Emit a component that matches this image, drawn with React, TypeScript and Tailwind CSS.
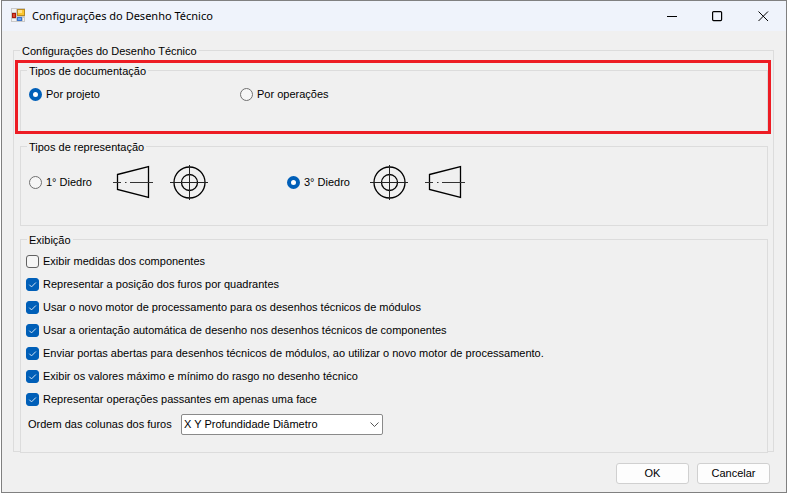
import React, { useState } from "react";

interface GroupBoxProps {
  title: string;
  className?: string;
  children: React.ReactNode;
}

const GroupBox: React.FC<GroupBoxProps> = ({ title, className = "", children }) => {
  return (
    <fieldset className={`min-w-0 border border-[#dcdcdc] bg-[#f0f0f0] ${className}`}>
      <legend className="ml-1.5 px-0.5 pt-px leading-[14px]">{title}</legend>
      {children}
    </fieldset>
  );
};

interface RadioProps {
  name: string;
  label: string;
  checked: boolean;
  onChange: () => void;
}

const Radio: React.FC<RadioProps> = ({ name, label, checked, onChange }) => {
  return (
    <label className="flex items-center gap-1 whitespace-nowrap">
      <input
        type="radio"
        name={name}
        checked={checked}
        onChange={onChange}
        className="size-[13px] shrink-0 appearance-none rounded-full border border-[#707070] bg-[#f6f6f6] checked:border-4 checked:border-[#005fb8] checked:bg-white"
      />
      {label}
    </label>
  );
};

interface CheckProps {
  label: string;
  checked: boolean;
  onChange: () => void;
}

const Check: React.FC<CheckProps> = ({ label, checked, onChange }) => {
  return (
    <label className="flex h-[23px] items-center gap-1 whitespace-nowrap">
      <span className="grid size-[13px] shrink-0">
        <input
          type="checkbox"
          checked={checked}
          onChange={onChange}
          className="col-start-1 row-start-1 size-[13px] appearance-none rounded-[3px] border border-[#626262] bg-[#f6f6f6] checked:border-[#005fb8] checked:bg-[#005fb8]"
        />
        {checked && (
          <svg
            className="pointer-events-none col-start-1 row-start-1 size-[13px]"
            viewBox="0 0 13 13"
            fill="none"
            stroke="#d5e6f6"
            aria-hidden="true"
          >
            <path d="M3.3 6.7 5.5 8.9 9.9 4.5" />
          </svg>
        )}
      </span>
      {label}
    </label>
  );
};

const ConeIcon = () => (
  <svg className="h-9 w-10 shrink-0" viewBox="0 0 40 36" fill="none" stroke="#000" aria-hidden="true">
    <path d="M4.5 10.5 35.5 2.5V33.5L4.5 25.5Z" strokeWidth="1.3" />
    <path d="M0 18.5H8M12 18.5H13.5M17 18.5H40" stroke="#333" />
  </svg>
);

const CircleIcon = () => (
  <svg className="h-9 w-[38px] shrink-0" viewBox="0 0 38 36" fill="none" stroke="#000" aria-hidden="true">
    <circle cx="19.5" cy="18.5" r="15.5" strokeWidth="1.3" />
    <circle cx="19.5" cy="18.5" r="8" strokeWidth="1.3" />
    <path d="M0 18.5H38M19.5 1V36" stroke="#222" />
  </svg>
);

const FormIcon = () => (
  <svg className="size-4" viewBox="0 0 16 16" aria-hidden="true">
    <rect x="1" y="0" width="14" height="14" fill="#c9c9c9" />
    <path d="M2 1H6V4H2ZM2 11H6V13H2ZM13 10H14V13H13Z" fill="#f2f2f2" />
    <rect x="7.5" y="1.5" width="7" height="6" fill="#fbc62f" stroke="#b98b22" />
    <rect x="8" y="2" width="4" height="3" fill="#ffe18a" />
    <rect x="2.5" y="5.5" width="3" height="4" fill="#dc4a30" stroke="#a8190f" />
    <rect x="7.5" y="9.5" width="4" height="3" fill="#6aa6f5" stroke="#3b74cc" />
  </svg>
);

const initialOptions = [
  { label: "Exibir medidas dos componentes", checked: false },
  { label: "Representar a posição dos furos por quadrantes", checked: true },
  { label: "Usar o novo motor de processamento para os desenhos técnicos de módulos", checked: true },
  { label: "Usar a orientação automática de desenho nos desenhos técnicos de componentes", checked: true },
  {
    label: "Enviar portas abertas para desenhos técnicos de módulos, ao utilizar o novo motor de processamento.",
    checked: true,
  },
  { label: "Exibir os valores máximo e mínimo do rasgo no desenho técnico", checked: true },
  { label: "Representar operações passantes em apenas uma face", checked: true },
];

const App: React.FC = () => {
  const [docType, setDocType] = useState("projeto");
  const [diedro, setDiedro] = useState("3");
  const [options, setOptions] = useState(initialOptions);

  const toggle = (index: number) =>
    setOptions(options.map((o, i) => (i === index ? { ...o, checked: !o.checked } : o)));

  return (
    <div className="bg-white pb-px pl-px">
      <div className="border border-[#808080] bg-[#f0f0f0] font-['Liberation_Sans',sans-serif] text-[11px] text-black">
        <header className="flex h-[30px] items-center bg-[#eff3fb] pl-2">
          <FormIcon />
          <h1 className="ml-1.5 flex-1 font-['Noto_Sans',sans-serif] text-[11px]">
            Configurações do Desenho Técnico
          </h1>
          <button aria-label="Minimizar" className="grid h-full w-[46px] place-items-center">
            <svg className="size-[11px]" viewBox="0 0 11 11" stroke="#000" aria-hidden="true">
              <path d="M1 5.5H11" />
            </svg>
          </button>
          <button aria-label="Maximizar" className="grid h-full w-[46px] place-items-center">
            <svg className="size-[11px]" viewBox="0 0 11 11" fill="none" stroke="#000" aria-hidden="true">
              <rect x=".6" y=".6" width="9" height="9" rx="1" strokeWidth="1.2" />
            </svg>
          </button>
          <button aria-label="Fechar" className="grid h-full w-[46px] place-items-center">
            <svg className="size-[11px]" viewBox="0 0 11 11" stroke="#000" aria-hidden="true">
              <path d="M.5 .5 10 10M10 .5 .5 10" />
            </svg>
          </button>
        </header>

        <main className="pt-3 pr-3 pb-2 pl-[11px]">
          <GroupBox title="Configurações do Desenho Técnico">
            <div className="flex flex-col gap-1.5 pt-[5px] pr-[5px] pl-1.5">
              <div className="relative">
                <GroupBox title="Tipos de documentação" className="pb-[29px]">
                  <div className="grid h-[25px] grid-cols-[211px_1fr] items-center pt-2 pl-2">
                    <Radio
                      name="doc"
                      label="Por projeto"
                      checked={docType === "projeto"}
                      onChange={() => setDocType("projeto")}
                    />
                    <Radio
                      name="doc"
                      label="Por operações"
                      checked={docType === "operacoes"}
                      onChange={() => setDocType("operacoes")}
                    />
                  </div>
                </GroupBox>
                <div className="pointer-events-none absolute -top-[3px] -right-[3px] -bottom-px -left-[5px] border-3 border-[#ed1c24]" />
              </div>

              <GroupBox title="Tipos de representação">
                <div className="grid h-[71px] grid-cols-[258px_1fr] items-start pt-2.5 pl-2">
                  <div className="flex items-center">
                    <div className="w-[84px]">
                      <Radio name="diedro" label="1° Diedro" checked={diedro === "1"} onChange={() => setDiedro("1")} />
                    </div>
                    <div className="flex gap-[17px]">
                      <ConeIcon />
                      <CircleIcon />
                    </div>
                  </div>
                  <div className="flex items-center">
                    <div className="w-[83px]">
                      <Radio name="diedro" label="3° Diedro" checked={diedro === "3"} onChange={() => setDiedro("3")} />
                    </div>
                    <div className="flex gap-[17px]">
                      <CircleIcon />
                      <ConeIcon />
                    </div>
                  </div>
                </div>
              </GroupBox>

              <GroupBox title="Exibição" className="-mb-0.5">
                <div className="pt-[3px] pb-[17px] pl-[5px]">
                  {options.map((option, index) => (
                    <Check
                      key={option.label}
                      label={option.label}
                      checked={option.checked}
                      onChange={() => toggle(index)}
                    />
                  ))}
                  <div className="flex items-center pt-[3px] pl-0.5">
                    <label htmlFor="ordem" className="w-[153px]">
                      Ordem das colunas dos furos
                    </label>
                    <div className="grid h-[21px] w-[202px] items-center">
                      <select
                        id="ordem"
                        className="col-start-1 row-start-1 h-[21px] w-full appearance-none rounded-[2px] border border-[#8a8a8a] bg-white pl-0.5"
                      >
                        <option>X Y Profundidade Diâmetro</option>
                      </select>
                      <svg
                        className="pointer-events-none col-start-1 row-start-1 mr-1 h-[5px] w-[9px] justify-self-end"
                        viewBox="0 0 9 5"
                        fill="none"
                        stroke="#555"
                        aria-hidden="true"
                      >
                        <path d="M.5 .5 4.5 4.5 8.5 .5" />
                      </svg>
                    </div>
                  </div>
                </div>
              </GroupBox>
            </div>
          </GroupBox>

          <div className="mt-[11px] mr-1 flex justify-end gap-2">
            <button className="h-[21px] w-[73px] rounded-[3px] border border-[#d0d0d0] bg-[#fdfdfd]">OK</button>
            <button className="h-[21px] w-[73px] rounded-[3px] border border-[#d0d0d0] bg-[#fdfdfd]">Cancelar</button>
          </div>
        </main>
      </div>
    </div>
  );
};

export default App;
